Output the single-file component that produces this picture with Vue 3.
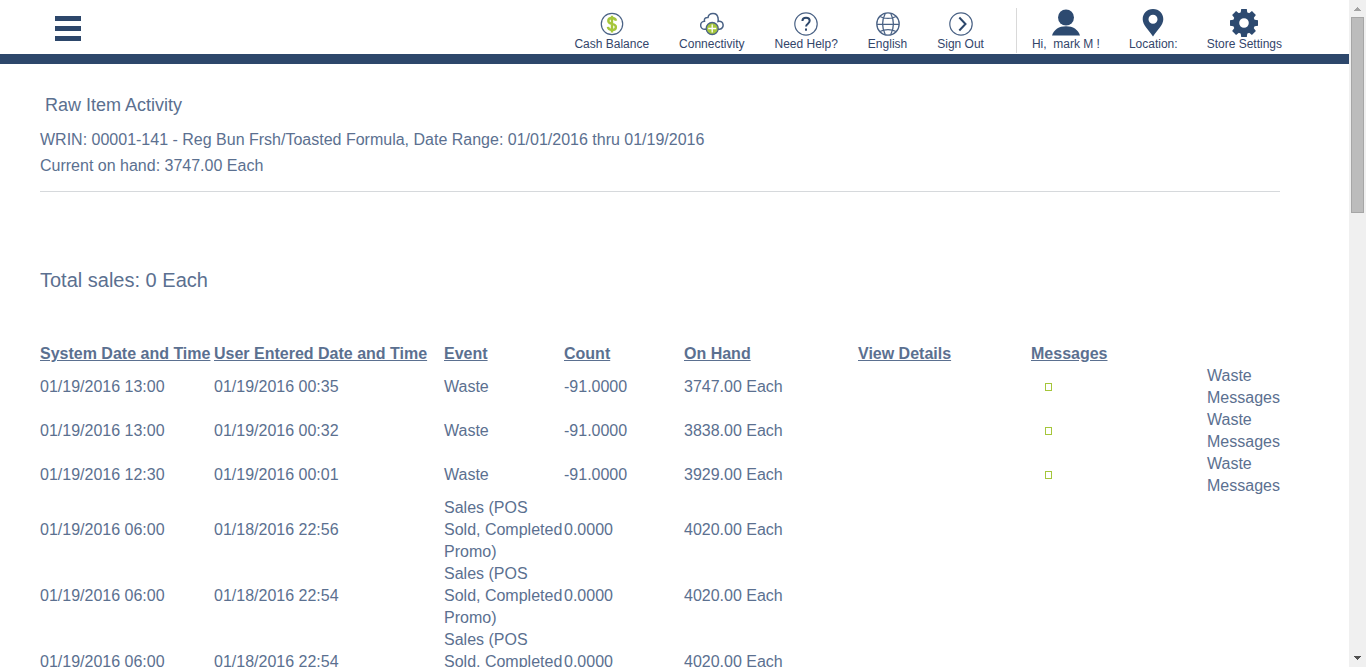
<script setup>
const columns = [
  { label: 'System Date and Time', width: 174 },
  { label: 'User Entered Date and Time', width: 230 },
  { label: 'Event', width: 120 },
  { label: 'Count', width: 120 },
  { label: 'On Hand', width: 174 },
  { label: 'View Details', width: 173 },
  { label: 'Messages', width: 176 },
  { label: '', width: 73 },
]

const sales = 'Sales (POS Sold, Completed Promo)'
const rows = [
  { system: '01/19/2016 13:00', user: '01/19/2016 00:35', event: 'Waste', count: '-91.0000', onHand: '3747.00 Each', message: 'Waste Messages' },
  { system: '01/19/2016 13:00', user: '01/19/2016 00:32', event: 'Waste', count: '-91.0000', onHand: '3838.00 Each', message: 'Waste Messages' },
  { system: '01/19/2016 12:30', user: '01/19/2016 00:01', event: 'Waste', count: '-91.0000', onHand: '3929.00 Each', message: 'Waste Messages' },
  { system: '01/19/2016 06:00', user: '01/18/2016 22:56', event: sales, count: '0.0000', onHand: '4020.00 Each' },
  { system: '01/19/2016 06:00', user: '01/18/2016 22:54', event: sales, count: '0.0000', onHand: '4020.00 Each' },
  { system: '01/19/2016 06:00', user: '01/18/2016 22:54', event: sales, count: '0.0000', onHand: '4020.00 Each' },
]
const teeth = [0, 45, 90, 135, 180, 225, 270, 315]
</script>

<template>
  <div class="screen">
    <div class="page">
      <header class="topbar">
        <button class="menu" type="button" aria-label="Menu">
          <span></span><span></span><span></span>
        </button>
        <nav class="tools">
          <a class="tool" href="#">
            <svg width="24" height="24" viewBox="0 0 24 24">
              <circle cx="12" cy="12" r="10.7" fill="none" stroke="#4a6285" stroke-width="1.2" />
              <path d="M16 8.8C15.6 6.9 14.1 6 12 6S8.300 7 8.300 8.900c0 4 7.600 2 7.600 6 0 2.100-1.700 3.100-3.900 3.100s-3.800-1-4.100-3.100M12 3.800v16.600" fill="none" stroke="#a5c63b" stroke-width="2.400" />
            </svg>
            <span>Cash Balance</span>
          </a>
          <a class="tool" href="#">
            <svg width="24" height="24" viewBox="0 0 24 24">
              <path d="M6.500 17.300H4.800a4 4 0 0 1-.3-8C4 6.500 5.500 5.300 8 5.500 9 .2 17.300.2 18 6c.4 1.500.2 2.500 0 3.500 6-1.500 7 7 1.500 7.800H18" fill="none" stroke="#4a6285" stroke-width="1.500" />
              <circle cx="12.200" cy="16.500" r="6" fill="#a5c63b" stroke="#4a6285" stroke-width="1.300" />
              <path d="M12.200 12.500v8M8.200 16.500h8" stroke="#fff" stroke-width="1.300" />
            </svg>
            <span>Connectivity</span>
          </a>
          <a class="tool" href="#">
            <svg width="24" height="24" viewBox="0 0 24 24">
              <circle cx="12" cy="12" r="11.200" fill="none" stroke="#4a6285" stroke-width="1.200" />
              <path d="M8.400 9c.1-2.100 1.500-3.200 3.600-3.200 2.200 0 3.700 1.200 3.700 3 0 2.700-3.600 3-3.600 5.700" fill="none" stroke="#2d476b" stroke-width="2" />
              <rect x="11" y="16.500" width="2" height="2.200" fill="#2d476b" />
            </svg>
            <span>Need Help?</span>
          </a>
          <a class="tool" href="#">
            <svg width="24" height="24" viewBox="0 0 24 24" fill="none" stroke="#4a6285" stroke-width="1.300">
              <circle cx="12" cy="12" r="11.200" />
              <path d="M9.200 1.500C6 8 6 16 9.200 22.500M14.800 1.500C18 8 18 16 14.800 22.500M1 12.400h22M4 4.500c4.500 2.600 11.500 2.600 16 0M4 19.500c4.500-2.600 11.500-2.600 16 0" />
            </svg>
            <span>English</span>
          </a>
          <a class="tool" href="#">
            <svg width="24" height="24" viewBox="0 0 24 24">
              <circle cx="12" cy="12" r="11.200" fill="none" stroke="#4a6285" stroke-width="1.200" />
              <path d="M10.300 5.500L16.500 12l-6.200 6.500" fill="none" stroke="#2d476b" stroke-width="2" />
            </svg>
            <span>Sign Out</span>
          </a>
          <div class="account">
            <a class="tool" href="#">
              <svg width="28" height="28" viewBox="0 0 28 28" fill="#2d4a70">
                <circle cx="14" cy="8.500" r="8" />
                <path d="M0 26.500C2 20.500 7 17.300 14 17.300S26 20.500 28 26.500z" />
              </svg>
              <span>Hi,&nbsp; mark M !</span>
            </a>
            <a class="tool" href="#">
              <svg width="22" height="28" viewBox="0 0 22 28">
                <path d="M11 0C4.800 0 .7 4.500.7 10.200.7 16 6.500 20.500 11 27.500c4.500-7 10.300-11.500 10.300-17.300C21.300 4.500 17.200 0 11 0zm0 5.700a4.500 4.500 0 1 1 0 9 4.500 4.500 0 0 1 0-9z" fill="#2d4a70" />
              </svg>
              <span>Location:</span>
            </a>
            <a class="tool" href="#">
              <svg width="28" height="28" viewBox="0 0 28 28" fill="#2d4a70">
                <circle cx="14" cy="14" r="7.900" fill="none" stroke="#2d4a70" stroke-width="6.200" />
                <path v-for="a in teeth" :key="a" d="M10.500 5L11.200 0h5.600l.7 5z" :transform="`rotate(${a} 14 14)`" />
              </svg>
              <span>Store Settings</span>
            </a>
          </div>
        </nav>
      </header>

      <main class="content">
        <section class="summary">
          <h1>Raw Item Activity</h1>
          <p>WRIN: 00001-141 - Reg Bun Frsh/Toasted Formula, Date Range: 01/01/2016 thru 01/19/2016</p>
          <p>Current on hand: 3747.00 Each</p>
        </section>
        <h2>Total sales: 0 Each</h2>
        <table>
          <colgroup>
            <col v-for="(c, i) in columns" :key="i" :style="{ width: c.width + 'px' }" />
          </colgroup>
          <thead>
            <tr>
              <th v-for="(c, i) in columns" :key="i" scope="col">{{ c.label }}</th>
            </tr>
          </thead>
          <tbody>
            <tr v-for="(r, i) in rows" :key="i">
              <td>{{ r.system }}</td>
              <td>{{ r.user }}</td>
              <td>{{ r.event }}</td>
              <td>{{ r.count }}</td>
              <td>{{ r.onHand }}</td>
              <td></td>
              <td><a v-if="r.message" class="flag" href="#" aria-label="Open message"></a></td>
              <td>{{ r.message }}</td>
            </tr>
          </tbody>
        </table>
      </main>
    </div>

    <div class="scrollbar" aria-hidden="true">
      <svg width="17" height="17" viewBox="0 0 17 17" shape-rendering="crispEdges"><path d="M5 11h7L8.500 7z" fill="#a3a3a3" /></svg>
      <div class="track"><div class="thumb"></div></div>
      <svg width="17" height="17" viewBox="0 0 17 17" shape-rendering="crispEdges"><path d="M5 6h7L8.500 10z" fill="#505050" /></svg>
    </div>
  </div>
</template>

<style>
body {
  margin: 0;
  background: #fff;
}
</style>

<style scoped>
.screen {
  display: flex;
  height: 100vh;
  overflow: hidden;
  font-family: "Liberation Sans", Arial, sans-serif;
  font-size: 16px;
  line-height: 22px;
  color: #5b7090;
}
.page {
  flex: 1;
  min-width: 0;
  overflow: hidden;
}
.topbar {
  display: flex;
  justify-content: space-between;
  align-items: flex-start;
  height: 54px;
  padding: 0 67px 0 55px;
  border-bottom: 10px solid #2d476b;
}
.menu {
  display: flex;
  flex-direction: column;
  gap: 5px;
  margin: 16px 0 0;
  padding: 0;
  border: 0;
  background: none;
}
.menu span {
  width: 26px;
  height: 5px;
  background: #2d476b;
}
.tools {
  display: flex;
  gap: 30px;
  padding-top: 8px;
}
.account {
  display: flex;
  gap: 29px;
  height: 45px;
  margin-left: 2px;
  padding-left: 15px;
  border-left: 1px solid #d9d9d9;
}
.tool {
  display: flex;
  flex-direction: column;
  align-items: center;
  justify-content: flex-end;
  height: 43px;
  font-size: 12px;
  line-height: 14px;
  color: #33456a;
  text-decoration: none;
  white-space: nowrap;
}
.tool svg[height="24"] {
  margin-bottom: 1px;
}
.content {
  padding: 30px 69px 0 40px;
}
.summary {
  border-bottom: 1px solid #d6d9dc;
  padding-bottom: 12px;
}
h1 {
  margin: 0;
  padding: 0 5px 11px;
  font-size: 18px;
  line-height: 22px;
  font-weight: 400;
}
p {
  margin: 0;
  line-height: 26px;
}
h2 {
  margin: 76px 0 51px;
  font-size: 20px;
  line-height: 24px;
  font-weight: 400;
}
table {
  width: 100%;
  table-layout: fixed;
  border-collapse: collapse;
}
th,
td {
  padding: 0;
  text-align: left;
  vertical-align: middle;
}
th {
  height: 22px;
  white-space: nowrap;
  text-decoration: underline;
}
.flag {
  display: block;
  box-sizing: border-box;
  width: 7px;
  height: 8px;
  margin-left: 14px;
  border: 1px solid #a5c63b;
}
.scrollbar {
  display: flex;
  flex-direction: column;
  width: 17px;
  background: #f0f0f0;
}
.scrollbar svg {
  display: block;
}
.track {
  flex: 1;
}
.thumb {
  box-sizing: border-box;
  height: 31%;
  margin: 0 2px;
  border: 1px solid #a6a6a6;
  background: #bcbcbc;
}
</style>
